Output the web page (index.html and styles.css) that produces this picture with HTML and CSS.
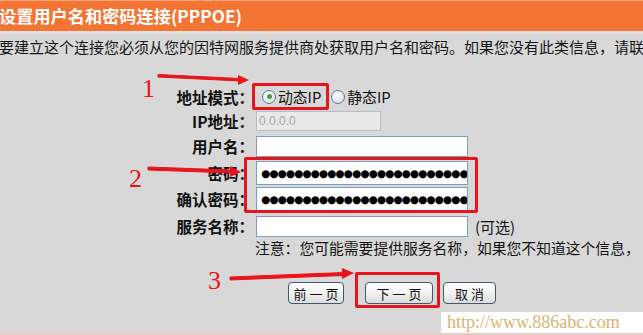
FILE: index.html
```html
<!DOCTYPE html>
<html lang="zh">
<head>
<meta charset="utf-8">
<title>设置用户名和密码连接(PPPOE)</title>
<link rel="stylesheet" href="styles.css">
</head>
<body>
<div class="page">
  <div class="hdr">设置用户名和密码连接(PPPOE)</div>
  <div class="strip"></div>
  <p class="desc">要建立这个连接您必须从您的因特网服务提供商处获取用户名和密码。如果您没有此类信息，请联</p>

  <div class="form">
    <div class="row r1">
      <span class="lbl">地址模式：</span>
      <div class="ctl">
        <label class="opt"><span class="radio on"></span>动态IP</label>
        <label class="opt"><span class="radio"></span>静态IP</label>
      </div>
    </div>
    <div class="row r2">
      <span class="lbl">IP地址：</span>
      <div class="ctl"><input class="inp ip" type="text" value="0.0.0.0" disabled></div>
    </div>
    <div class="row r3">
      <span class="lbl">用户名：</span>
      <div class="ctl"><input class="inp wide" type="text"></div>
    </div>
    <div class="row r4">
      <span class="lbl">密码：</span>
      <div class="ctl"><div class="inp wide pw">●●●●●●●●●●●●●●●●●●●●●●●●●</div></div>
    </div>
    <div class="row r5">
      <span class="lbl">确认密码：</span>
      <div class="ctl"><div class="inp wide pw">●●●●●●●●●●●●●●●●●●●●●●●●●</div></div>
    </div>
    <div class="row r6">
      <span class="lbl">服务名称：</span>
      <div class="ctl"><input class="inp wide svc" type="text"><span class="opt-txt">(可选)</span></div>
    </div>
  </div>
  <p class="note">注意：您可能需要提供服务名称，如果您不知道这个信息，</p>

  <div class="btns">
    <button class="btn prev">前一页</button>
    <button class="btn next">下一页</button>
    <button class="btn cancel">取消</button>
  </div>

  <div class="mark mark1"></div>
  <div class="mark mark2"></div>
  <div class="mark mark3"></div>

  <svg class="annot" width="643" height="335" viewBox="0 0 643 335">
    <g fill="#e8141c" stroke="#e8141c">
      <path d="M158 74.5 L240 78.5 L240 81 L158 77 Z" stroke-width="1"/>
      <polygon points="238,75 249,80 238,85" stroke="none"/>
      <path d="M148 167 L232 170 L232 173 L148 170 Z" stroke-width="1"/>
      <polygon points="230,166 241,172 230,177" stroke="none"/>
      <path d="M230 277 L344 272.5 L344 275.5 L230 280 Z" stroke-width="1"/>
      <polygon points="342,268 354,273 342,279" stroke="none"/>
    </g>
    <g class="num">
      <text x="142" y="97">1</text>
      <text x="129" y="187">2</text>
      <text x="208" y="289">3</text>
    </g>
  </svg>

  <div class="wm">http://www.886abc.com</div>
</div>
</body>
</html>
```

FILE: styles.css
```css
* { box-sizing: border-box; }
html, body { margin: 0; padding: 0; }
body {
  background: #d8d8d8;
  font-family: "Noto Sans CJK SC", "Liberation Sans", sans-serif;
  color: #111;
}
.page {
  position: relative;
  width: 643px;
  height: 335px;
  overflow: hidden;
  background: #d8d8d8;
  border-bottom: 2px solid #e6cdc6;
}
.hdr {
  height: 31px;
  background: #f37433;
  border-top: 1px solid #f7a27a;
  color: #fff;
  font-weight: bold;
  font-size: 17.2px;
  line-height: 30px;
  margin-left: -1px;
  white-space: nowrap;
}
.strip { height: 3px; background: #e2e2e2; }
.desc {
  margin: 3px 0 0 -1px;
  height: 20px;
  line-height: 20px;
  font-size: 15px;
  white-space: nowrap;
  overflow: hidden;
  color: #151515;
}
.form { margin-top: 27px; }
.row { display: flex; align-items: center; }
.r1 { height: 25px; }
.r2 { height: 24px; }
.r3 { height: 26px; }
.r4 { height: 27px; }
.r5 { height: 26px; }
.r6 { height: 28px; }
.lbl {
  width: 255px;
  text-align: right;
  font-weight: bold;
  font-size: 15.5px;
  white-space: nowrap;
  padding-right: 1px;
}
.ctl { display: flex; align-items: center; padding-left: 1px; }
.opt {
  display: flex;
  align-items: center;
  font-size: 14.8px;
  line-height: 18px;
  color: #111;
}
.opt:first-child { margin-left: 6px; margin-right: 10px; }
.radio {
  display: inline-block;
  width: 14px;
  height: 14px;
  border-radius: 50%;
  border: 1px solid #5a7ea6;
  background: radial-gradient(circle at 40% 35%, #ffffff 0%, #e6e6e6 60%, #c8ccd4 100%);
  margin-right: 2px;
  position: relative;
}
.radio.on::after {
  content: "";
  position: absolute;
  left: 3.5px;
  top: 3.5px;
  width: 5px;
  height: 5px;
  border-radius: 50%;
  background: #3aa33a;
}
.inp {
  border: 1px solid #7f9db9;
  background: #fff;
  font-family: "Liberation Sans", sans-serif;
  font-size: 12px;
  padding: 0 2px;
  margin: 0;
  outline: none;
}
.ip {
  width: 125px;
  height: 20px;
  background: #e9e9e9;
  border-color: #b5bccb;
  color: #a6a6a6;
}
.wide { width: 212px; }
.r3 .wide { height: 21px; }
.svc { height: 21px; }
.pw {
  height: 24px;
  display: flex;
  align-items: center;
  font-family: "DejaVu Sans", sans-serif;
  font-size: 10.5px;
  letter-spacing: -0.9px;
  color: #000;
  overflow: hidden;
  white-space: nowrap;
  padding-left: 4px;
}
.opt-txt { margin-left: 7px; font-size: 15px; color: #111; }
.note {
  margin: 0;
  padding-left: 255px;
  height: 16px;
  line-height: 16px;
  font-size: 14.8px;
  white-space: nowrap;
  color: #151515;
}
.btns {
  display: flex;
  margin-top: 26px;
  padding-left: 288px;
}
.btn {
  height: 22px;
  border: 1px solid #3d5878;
  border-radius: 4px;
  background: linear-gradient(#ffffff 0%, #f4f4f2 45%, #dcdcd8 100%);
  font-family: "Noto Sans CJK SC", sans-serif;
  font-size: 13px;
  letter-spacing: 3px;
  text-indent: 3px;
  color: #111;
  padding: 0;
  margin: 0;
}
.prev { width: 56px; }
.next { width: 68px; margin-left: 21px; }
.cancel { width: 53px; margin-left: 10px; }
.mark {
  position: absolute;
  border: 3px solid #e8141c;
  border-radius: 2px;
}
.mark1 { left: 252px; top: 83px; width: 77px; height: 27px; }
.mark2 { left: 244px; top: 157px; width: 234px; height: 56px; }
.mark3 { left: 355px; top: 272px; width: 85px; height: 36px; }
.annot { position: absolute; left: 0; top: 0; pointer-events: none; }
.num text {
  font-family: "Liberation Serif", serif;
  font-size: 26px;
  fill: #e8141c;
}
.wm {
  position: absolute;
  left: 441px;
  top: 312px;
  width: 202px;
  height: 21px;
  background: #fff;
  font-family: "Liberation Serif", serif;
  font-size: 18px;
  line-height: 21px;
  color: #d6b670;
  padding-left: 6px;
  white-space: nowrap;
}
```
